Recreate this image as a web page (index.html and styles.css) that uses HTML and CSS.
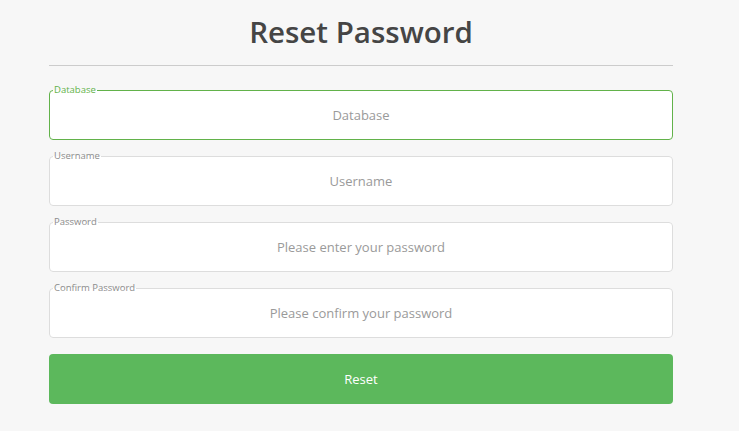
FILE: index.html
```html
<!DOCTYPE html>
<html>
<head>
<meta charset="utf-8">
<link rel="stylesheet" href="styles.css">
</head>
<body>
<div class="page">
  <h1 class="title">Reset Password</h1>
  <hr class="rule">
  <form class="form">
    <fieldset class="field field-active">
      <legend class="label">Database</legend>
      <input class="input" type="text" placeholder="Database">
    </fieldset>
    <fieldset class="field">
      <legend class="label">Username</legend>
      <input class="input" type="text" placeholder="Username">
    </fieldset>
    <fieldset class="field">
      <legend class="label">Password</legend>
      <input class="input" type="password" placeholder="Please enter your password">
    </fieldset>
    <fieldset class="field">
      <legend class="label">Confirm Password</legend>
      <input class="input" type="password" placeholder="Please confirm your password">
    </fieldset>
    <button class="btn" type="button">Reset</button>
  </form>
</div>
</body>
</html>
```
FILE: styles.css
```css
html, body {
  margin: 0;
  padding: 0;
  background: #f7f7f7;
}
body {
  font-family: "Open Sans", "Noto Sans", sans-serif;
}
.page {
  width: 624px;
  margin-left: 49px;
  padding-top: 12px;
}
.title {
  margin: 0;
  text-align: center;
  font-size: 29.5px;
  font-weight: 600;
  line-height: 40px;
  color: #454545;
}
.rule {
  margin: 13px 0 0 0;
  border: 0;
  border-top: 1px solid #cccccc;
  height: 0;
}
.form {
  display: flex;
  flex-direction: column;
  gap: 11px;
  margin-top: 19px;
}
.field {
  margin: 0;
  padding: 0;
  border: 1px solid #dddddd;
  border-radius: 4px;
  background: #ffffff;
  min-width: 0;
}
.field-active {
  border-color: #62b24a;
}
.label {
  margin-left: 3px;
  padding: 0 1px;
  font-size: 9.5px;
  line-height: 10px;
  color: #8c8c8c;
}
.field-active .label {
  color: #62b24a;
}
.input {
  display: block;
  width: 100%;
  box-sizing: border-box;
  height: 44px;
  padding: 0 0 4px 0;
  border: 0;
  outline: none;
  background: transparent;
  text-align: center;
  font-family: "Open Sans", "Noto Sans", sans-serif;
  font-size: 13px;
  color: #555;
}
.input::placeholder {
  color: #9a9a9a;
}
.btn {
  margin-top: 5px;
  height: 50px;
  border: 0;
  border-radius: 4px;
  background: #5cb85c;
  color: #ffffff;
  font-family: "Open Sans", "Noto Sans", sans-serif;
  font-size: 13px;
  cursor: pointer;
}
```
